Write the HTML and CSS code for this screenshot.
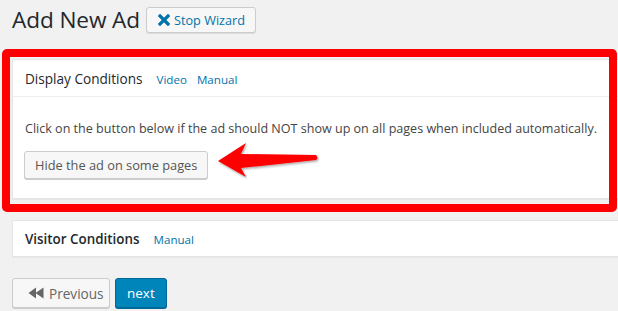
FILE: index.html
```html
<!DOCTYPE html>
<html>
<head>
<meta charset="utf-8">
<link rel="stylesheet" href="styles.css">
</head>
<body>
<div class="wrap">
  <div class="title-row">
    <h1 class="page-title">Add New Ad</h1>
    <button class="btn btn-stop">
      <svg class="icon-x" width="12" height="12" viewBox="0 0 12 12"><path d="M2 2 L10 10 M10 2 L2 10" stroke="#0073aa" stroke-width="3.2" stroke-linecap="square"/></svg>
      Stop Wizard
    </button>
  </div>

  <div class="postbox postbox-display">
    <div class="hndle">
      <span class="hndle-title">Display Conditions</span>
      <a class="hndle-link">Video</a>
      <a class="hndle-link">Manual</a>
    </div>
    <div class="inside">
      <p class="desc">Click on the button below if the ad should NOT show up on all pages when included automatically.</p>
      <button class="btn btn-default">Hide the ad on some pages</button>
    </div>
  </div>

  <div class="postbox postbox-visitor">
    <div class="hndle">
      <span class="hndle-title bold">Visitor Conditions</span>
      <a class="hndle-link">Manual</a>
    </div>
  </div>

  <div class="nav-row">
    <button class="btn btn-default btn-prev">
      <svg class="icon-back" width="16" height="12" viewBox="0 0 16 12"><path d="M0.5 6 L8 0.5 V11.5 Z M7.5 6 L15.5 0.5 V11.5 Z" fill="#666"/></svg>
      Previous
    </button>
    <button class="btn btn-primary">next</button>
  </div>
</div>

<div class="annot-box"></div>
<svg class="annot-arrow" width="110" height="40" viewBox="0 0 110 40">
  <defs>
    <filter id="sh" x="-10%" y="-20%" width="130%" height="160%">
      <feDropShadow dx="1" dy="1.5" stdDeviation="1" flood-color="#000" flood-opacity="0.35"/>
    </filter>
  </defs>
  <path d="M2 20 L30 2 L25 13 L100 14 Q103 17 100 19 L25 27 L30 36 Z" fill="#f00" filter="url(#sh)"/>
</svg>
</body>
</html>
```

FILE: styles.css
```css
* { box-sizing: border-box; }
html, body { margin: 0; padding: 0; }
body {
  background: #f1f1f1;
  font-family: "Open Sans", "Noto Sans", sans-serif;
  color: #444;
  overflow: hidden;
  width: 618px;
  height: 311px;
  position: relative;
}
.wrap {
  padding-left: 12px;
}
.title-row {
  display: flex;
  align-items: center;
  height: 40px;
  gap: 6px;
}
.page-title {
  margin: 0;
  font-size: 22.6px;
  font-weight: 400;
  color: #23282d;
  line-height: 1;
  letter-spacing: -0.1px;
}
.btn {
  font-family: inherit;
  display: inline-flex;
  align-items: center;
  border-radius: 3px;
  cursor: pointer;
  margin: 0;
}
.btn-stop {
  height: 26px;
  padding: 0 10px 0 11px;
  gap: 4px;
  border: 1px solid #ccc;
  background: #f7f7f7;
  color: #0073aa;
  font-size: 12.7px;
  font-weight: 500;
  box-shadow: 0 1px 0 #ddd;
}
.postbox {
  background: #fff;
  border: 1px solid #e5e5e5;
  border-right: none;
  box-shadow: 0 1px 1px rgba(0,0,0,0.04);
  margin-right: -4px;
}
.postbox-display {
  margin-top: 19px;
  height: 140px;
}
.hndle {
  height: 37px;
  display: flex;
  align-items: center;
  padding-left: 12px;
  gap: 14px;
}
.postbox-display .hndle {
  border-bottom: 1px solid #eee;
}
.hndle-title {
  font-size: 13.6px;
  color: #23282d;
  font-weight: 500;
}
.hndle-title.bold { font-weight: 600; font-size: 13.4px; }
.hndle-link {
  font-size: 11.6px;
  color: #0073aa;
  margin-top: 2px;
}
.hndle-link + .hndle-link { margin-left: -4px; }
.inside {
  padding: 0 11px;
}
.desc {
  margin: 22px 0 13px 1px;
  font-size: 12.55px;
  line-height: 19px;
  color: #444;
}
.btn-default {
  height: 28px;
  padding: 0 10px;
  border: 1px solid #ccc;
  background: #f7f7f7;
  color: #555;
  font-size: 12.8px;
  box-shadow: 0 1px 0 #ccc;
}
.postbox-visitor {
  margin-top: 21px;
  height: 37px;
}
.postbox-visitor .hndle { height: 35px; }
.nav-row {
  margin-top: 21px;
  display: flex;
  gap: 5px;
}
.btn-prev {
  height: 30px;
  width: 98px;
  padding: 0 8px 0 15px;
  gap: 5px;
  font-size: 13.6px;
  color: #666;
}
.icon-back { flex: none; }
.btn-primary {
  height: 30px;
  padding: 0 11px;
  border: 1px solid #006799;
  background: #0085ba;
  color: #fff;
  font-size: 13.5px;
  box-shadow: 0 1px 0 #006799;
}
.annot-box {
  position: absolute;
  left: 2px;
  top: 49px;
  width: 615px;
  height: 163px;
  border: 8px solid #f00;
  border-radius: 5px;
  pointer-events: none;
}
.annot-arrow {
  position: absolute;
  left: 216px;
  top: 141px;
  pointer-events: none;
}
```
